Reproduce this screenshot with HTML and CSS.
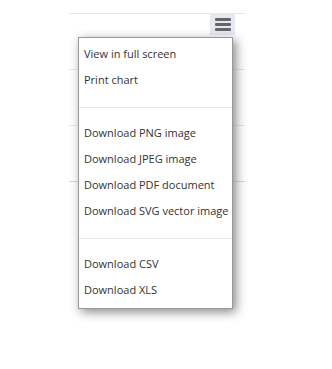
FILE: index.html
```html
<!DOCTYPE html>
<html lang="en">
<head>
    <meta charset="UTF-8">
    <meta name="viewport" content="width=device-width, initial-scale=1.0">
    <title>Chart export menu</title>
    <link rel="stylesheet" href="styles.css">
</head>
<body>
    <div class="chart">
        <!-- Plot gridlines -->
        <div class="plot">
            <div class="grid-line"></div>
            <div class="grid-line"></div>
            <div class="grid-line"></div>
            <div class="grid-line axis"></div>
        </div>

        <!-- Context button -->
        <div class="context-button">
            <span class="bar"></span>
            <span class="bar"></span>
            <span class="bar"></span>
        </div>

        <!-- Export menu -->
        <ul class="export-menu">
            <li class="menu-item">View in full screen</li>
            <li class="menu-item">Print chart</li>
            <li class="separator"></li>
            <li class="menu-item">Download PNG image</li>
            <li class="menu-item">Download JPEG image</li>
            <li class="menu-item">Download PDF document</li>
            <li class="menu-item">Download SVG vector image</li>
            <li class="separator"></li>
            <li class="menu-item">Download CSV</li>
            <li class="menu-item">Download XLS</li>
        </ul>
    </div>
</body>
</html>
```

FILE: styles.css
```css
/* Global Styles */
* {
    margin: 0;
    padding: 0;
    box-sizing: border-box;
}

body {
    background: #ffffff;
    font-family: 'Open Sans', sans-serif;
}

/* Chart */
.chart {
    position: relative;
    width: 332px;
    height: 369px;
}

.plot {
    margin-left: 69px;
    width: 176px;
    padding-top: 13px;
    display: flex;
    flex-direction: column;
    gap: 55px;
}

.grid-line {
    height: 1px;
    background: #e6e6e6;
}

.grid-line.axis {
    background: #ccd6eb;
}

/* Context Button */
.context-button {
    position: absolute;
    left: 210px;
    top: 13px;
    width: 25px;
    height: 22px;
    background: #e6e9f2;
    display: flex;
    flex-direction: column;
    justify-content: center;
    align-items: center;
    gap: 2px;
}

.bar {
    display: block;
    width: 16px;
    height: 3px;
    background: #666666;
    border-radius: 1px;
}

/* Export Menu */
.export-menu {
    position: absolute;
    left: 78px;
    top: 37px;
    width: 155px;
    list-style: none;
    background: #ffffff;
    border: 1px solid #999999;
    box-shadow: 3px 3px 10px #888888;
    padding: 3px 0 5px;
}

.menu-item {
    height: 26px;
    line-height: 26px;
    padding-left: 5px;
    font-size: 11px;
    color: #333333;
    white-space: nowrap;
}

.separator {
    height: 27px;
    padding-top: 14px;
}

.separator::after {
    content: "";
    display: block;
    height: 1px;
    background: #e6e6e6;
}
```
